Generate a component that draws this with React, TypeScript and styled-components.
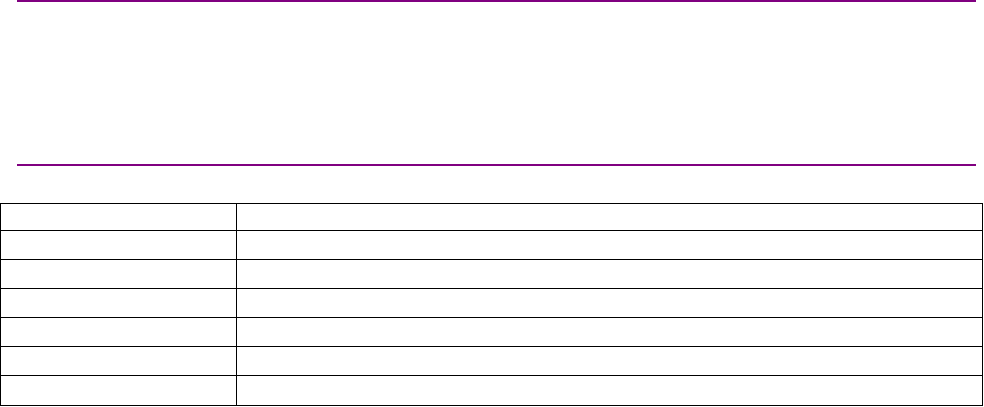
import React from 'react';
import styled, { createGlobalStyle } from 'styled-components';

const GlobalStyle = createGlobalStyle`
  html, body {
    margin: 0;
    padding: 0;
    background: #ffffff;
    font-family: 'Liberation Sans', Arial, sans-serif;
  }
`;

const Page = styled.div`
  display: flex;
  flex-direction: column;
  width: 984px;
`;

const Rule = styled.div`
  height: 2px;
  margin: 0 8px 0 17px;
  background-color: #800080;
`;

const Header = styled.div`
  height: 162px;
`;

const Grid = styled.table`
  margin-top: 37px;
  width: 983px;
  border-collapse: collapse;
  table-layout: fixed;
`;

const Row = styled.tr<{ $h: number }>`
  height: ${p => p.$h}px;
`;

const Cell = styled.td<{ $label?: boolean }>`
  width: ${p => (p.$label ? '235px' : 'auto')};
  padding: 0;
  border: 1px solid #000000;
  font-size: 13px;
`;

// pitch between lines: 27, then 29 each, last 30
const rows = [27, 29, 29, 29, 29, 29, 30];

const App: React.FC = () => {
  return (
    <>
      <GlobalStyle />
      <Page>
        <Rule />
        <Header />
        <Rule />
        <Grid>
          <tbody>
            {rows.map((h, i) => (
              <Row key={i} $h={h}>
                <Cell $label />
                <Cell />
              </Row>
            ))}
          </tbody>
        </Grid>
      </Page>
    </>
  );
};

export default App;
